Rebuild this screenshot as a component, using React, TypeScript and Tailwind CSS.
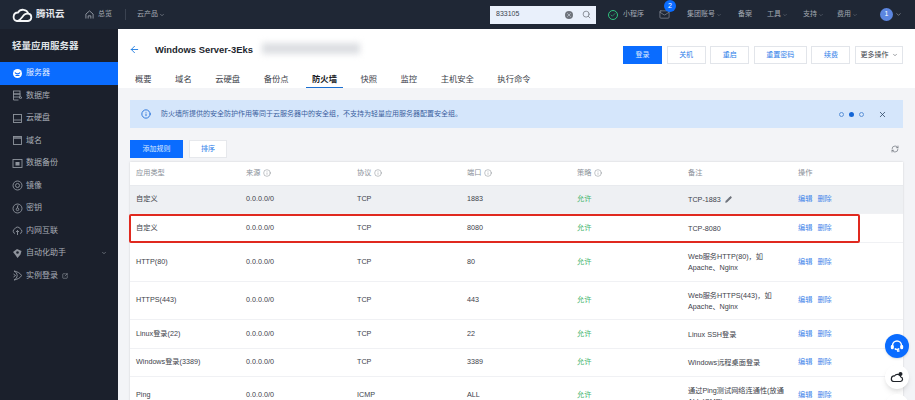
import { ArrowLeft, ChevronDown, Info, Pencil, Search, Mail, X, Check, SquareArrowOutUpRight, RefreshCw } from "lucide-react";
import type { ReactNode } from "react";

const font = "font-['Liberation_Sans','Noto_Sans_CJK_SC',sans-serif]";

const sideIcons: Record<string, ReactNode> = {
  服务器: (
    <>
      <circle cx="5.500" cy="5.500" r="4.500" fill="currentColor" stroke="none" />
      <path d="M3 4.500c1 1.800 4 1.800 5 0M3.500 7.500h4" stroke="#0a6cff" strokeWidth="1.100" />
    </>
  ),
  数据库: (
    <>
      <rect x="1.500" y="1" width="6.500" height="3" />
      <rect x="1.500" y="4" width="6.500" height="3" />
      <path d="M1.500 7v3h5M8.500 8.500a1 1 0 1 1 .01 0" />
    </>
  ),
  云硬盘: (
    <>
      <rect x="1.500" y="1.500" width="8" height="8" />
      <path d="M1.500 7h8" />
    </>
  ),
  域名: (
    <>
      <rect x="1.500" y="1.500" width="8" height="8" />
      <path d="M1.500 3h8" strokeWidth="1.400" />
    </>
  ),
  数据备份: (
    <>
      <rect x="1" y="1.500" width="9" height="8" />
      <rect x="3.500" y="4" width="4" height="3.500" fill="currentColor" stroke="none" />
    </>
  ),
  镜像: (
    <>
      <circle cx="5.500" cy="5.500" r="4.500" />
      <circle cx="5.500" cy="5.500" r="2" />
    </>
  ),
  密钥: (
    <>
      <circle cx="5.500" cy="5.500" r="4.500" />
      <circle cx="5.500" cy="6.300" r="1.300" />
      <path d="M5.500 5V2.800h1" />
    </>
  ),
  内网互联: (
    <>
      <path d="M3 8.500a2.400 2.400 0 0 1-.2-4.600 3 3 0 0 1 5.600.2 2.300 2.300 0 0 1-.4 4.400" />
      <path d="M5.500 10V5.500M4 7l1.500-1.500L7 7" />
    </>
  ),
  自动化助手: (
    <>
      <path d="M5 1 9.500 3 8.500 6.500 5.500 10 3 6.500 1 4Z" fill="currentColor" stroke="none" />
      <circle cx="5.500" cy="4.500" r="1.300" fill="#1b202c" stroke="none" />
    </>
  ),
  实例登录: (
    <path d="M2 1c3 .5 6.500 2.200 7.500 4.500C8.500 8 5 9.500 2 10c2-1 3-2.500 3.200-4.500C5 3.500 4 2 2 1Z M1.500 4l2 1.500-2 1.500" />
  ),
};

const sideItems = [
  { label: "服务器", active: true },
  { label: "数据库" },
  { label: "云硬盘" },
  { label: "域名" },
  { label: "数据备份" },
  { label: "镜像" },
  { label: "密钥" },
  { label: "内网互联" },
  { label: "自动化助手", arrow: true },
  { label: "实例登录", ext: true },
];

const tabs = ["概要", "域名", "云硬盘", "备份点", "防火墙", "快照", "监控", "主机安全", "执行命令"];

const rows = [
  { type: "自定义", proto: "TCP", port: "1883", note: ["TCP-1883"], h: "h-[28px]", hover: true, edit: true },
  { type: "自定义", proto: "TCP", port: "8080", note: ["TCP-8080"], h: "h-[29px]" },
  { type: "HTTP(80)", proto: "TCP", port: "80", note: ["Web服务HTTP(80)，如", "Apache、Nginx"], h: "h-[39px]" },
  { type: "HTTPS(443)", proto: "TCP", port: "443", note: ["Web服务HTTPS(443)，如", "Apache、Nginx"], h: "h-[38px]" },
  { type: "Linux登录(22)", proto: "TCP", port: "22", note: ["Linux SSH登录"], h: "h-[29px]" },
  { type: "Windows登录(3389)", proto: "TCP", port: "3389", note: ["Windows远程桌面登录"], h: "h-[28px]" },
  { type: "Ping", proto: "ICMP", port: "ALL", note: ["通过Ping测试网络连通性(放通", "ALL ICMP)"], h: "h-[38px]" },
];

const cols = "grid grid-cols-[110px_111px_110px_110px_111px_110px_1fr] pl-[6px] items-center";

function TopBar() {
  return (
    <header className="h-[29px] shrink-0 bg-[#1f2735] flex items-center text-[#a3a9b3] text-[7px]">
      <svg width="21" height="14" viewBox="0 0 21 14" fill="none" stroke="#f4f6f8" strokeWidth="1.800" className="ml-[12px]">
        <path d="M5 13h11a3.700 3.700 0 0 0 .4-7.300A5.800 5.800 0 0 0 6 4.500 4.300 4.300 0 0 0 5 13Z" />
        <path d="M6 12.800c3-1 4.500-4.800 6.500-6.300 1.200-.9 2.600-1.100 4-.8" />
      </svg>
      <span className="ml-[3px] text-[9.500px] font-bold text-[#e6e8ec] w-[30px] whitespace-nowrap">腾讯云</span>
      <svg width="9" height="9" viewBox="0 0 10 10" fill="none" stroke="#a3a9b3" strokeWidth="0.900" className="ml-[19px]">
        <path d="M1 4.500 5 1l4 3.500V9.500M1 4.500V9.500M3.500 9.500V6.500h3v3" />
      </svg>
      <span className="ml-[4px] w-[16px]">总览</span>
      <div className="ml-[11px] h-[11px] w-px bg-[#3a4250]" />
      <span className="ml-[11px]">云产品</span>
      <ChevronDown size={6} className="ml-[1px]" />
      <div className="ml-[325px] h-[18px] w-[106px] bg-[#e9f0fb] flex items-center pl-[6px] pr-[5px] text-[#3b4250]">
        <span>833105</span>
        <span className="ml-auto w-[8px] h-[8px] rounded-full bg-[#6f747c] flex items-center justify-center">
          <X size={6} strokeWidth={2} className="text-[#e9f0fb]" />
        </span>
        <Search size={9} className="ml-[9px] text-[#6f747c]" />
      </div>
      <span className="ml-[12px] w-[10px] h-[10px] rounded-full border border-[#2fc37e] flex items-center justify-center">
        <Check size={6} strokeWidth={2.500} className="text-[#2fc37e]" />
      </span>
      <span className="ml-[5px]">小程序</span>
      <div className="relative ml-[15px]">
        <Mail size={11} strokeWidth={1.200} />
        <span className="absolute -top-[9px] left-[5px] w-[12px] h-[12px] rounded-full bg-[#0a6cff] text-white text-[7px] flex items-center justify-center">2</span>
      </div>
      <span className="ml-[17px]">集团账号</span>
      <ChevronDown size={6} className="ml-[1px] opacity-60" />
      <span className="ml-[16px]">备案</span>
      <span className="ml-[15px]">工具</span>
      <ChevronDown size={6} className="ml-[1px] opacity-60" />
      <span className="ml-[15px]">支持</span>
      <ChevronDown size={6} className="ml-[1px] opacity-60" />
      <span className="ml-[13px]">费用</span>
      <ChevronDown size={6} className="ml-[1px] opacity-60" />
      <span className="ml-[22px] w-[13px] h-[13px] rounded-full bg-[#5c86e0] text-white flex items-center justify-center">1</span>
      <ChevronDown size={7} className="ml-[2px]" />
    </header>
  );
}

function Sidebar() {
  return (
    <aside className="w-[118px] shrink-0 bg-[#1b202c] text-[#a9aeb7]">
      <div className="h-[33px] pl-[12px] pt-[1px] flex items-center text-[9.500px] font-bold text-[#dfe2e6]">轻量应用服务器</div>
      {sideItems.map((it) => (
        <div key={it.label} className={`h-[22.500px] pl-[12px] pr-[11px] flex items-center text-[8px] ${it.active ? "bg-[#0a6cff] text-[#e8f1ff]" : ""}`}>
          <svg width="11" height="11" viewBox="0 0 11 11" fill="none" stroke="currentColor" strokeWidth="0.900" className={it.active ? "text-white" : "text-[#8f949d]"}>
            {sideIcons[it.label]}
          </svg>
          <span className="ml-[3px]">{it.label}</span>
          {it.arrow && <ChevronDown size={6} className="ml-auto" />}
          {it.ext && <SquareArrowOutUpRight size={6} className="ml-[4px]" />}
        </div>
      ))}
    </aside>
  );
}

function DetailHeader() {
  const actions = [
    { label: "关机", w: "w-[39px]" },
    { label: "重启", w: "w-[39px]" },
    { label: "重置密码", w: "w-[53px]" },
    { label: "续费", w: "w-[39px]" },
  ];
  return (
    <div className="h-[59px] shrink-0 bg-white pl-[11px] pr-[12px] pt-[17px]">
      <div className="flex items-start h-[18px]">
        <ArrowLeft size={11} className="text-[#1f7ce0] mt-[-2px]" />
        <span className="ml-[15px] mt-[-2px] text-[9.400px] leading-[11px] font-bold text-[#23272e] whitespace-nowrap">Windows Server-3Eks</span>
        <div className="ml-[9px] mt-[-3px] w-[98px] h-[11px] bg-[#dcdee2] blur-[3px]" />
        <div className="ml-auto flex gap-[4.600px] text-[7px]">
          <button className="w-[39px] h-[18px] bg-[#0a6cff] text-[#dbe9ff]">登录</button>
          {actions.map((a) => (
            <button key={a.label} className={`${a.w} h-[18px] bg-white border border-[#e2e5ea] text-[#2b7de9]`}>{a.label}</button>
          ))}
          <button className="w-[48px] h-[18px] bg-white border border-[#e2e5ea] text-[#3d424a] flex items-center justify-center gap-[3px]">
            更多操作 <ChevronDown size={6} />
          </button>
        </div>
      </div>
      <nav className="flex gap-[11.500px] mt-[3px] text-[8.300px] text-[#3d424a]">
        {tabs.map((t) => (
          <span key={t} className={`px-[6px] h-[21px] pt-[4px] flex items-center border-b-[1.500px] ${t === "防火墙" ? "border-[#1b6fd0] font-bold text-[#17191d]" : "border-transparent"}`}>{t}</span>
        ))}
      </nav>
    </div>
  );
}

function Head({ label, tip }: { label: string; tip?: boolean }) {
  return (
    <span className="flex items-center gap-[3px]">
      {label}
      {tip && <Info size={8} strokeWidth={1.200} className="text-[#666c75]" />}
    </span>
  );
}

function RuleTable() {
  return (
    <div className="relative mt-[4px] bg-white shadow-[0_0_2px_rgba(0,0,0,0.15)] text-[7.200px] text-[#3d424a]">
      <div className={`${cols} h-[24px] text-[#8a9099] border-b border-[#e8eaee]`}>
        <Head label="应用类型" />
        <Head label="来源" tip />
        <Head label="协议" tip />
        <Head label="端口" tip />
        <Head label="策略" tip />
        <Head label="备注" />
        <Head label="操作" />
      </div>
      {rows.map((r, i) => (
        <div key={i} className={`${cols} ${r.h} border-b border-[#f0f1f4] ${r.hover ? "bg-[#eef0f3]" : ""}`}>
          <span>{r.type}</span>
          <span>0.0.0.0/0</span>
          <span>{r.proto}</span>
          <span>{r.port}</span>
          <span className="text-[#47b56f]">允许</span>
          <div className="leading-[11px]">
            {r.note.map((n, j) => (
              <div key={j} className="flex items-center gap-[4px] whitespace-nowrap">
                {n}
                {r.edit && <Pencil size={7} className="text-[#6f747c]" fill="currentColor" />}
              </div>
            ))}
          </div>
          <span className="flex gap-[5px] text-[#3f86ea]"><span>编辑</span><span>删除</span></span>
        </div>
      ))}
      <div className="absolute left-[-1px] top-[52px] w-[731px] h-[29px] border-2 border-[#e0291f] rounded-[2px]" />
    </div>
  );
}

export default function App() {
  return (
    <div className={`relative w-[915px] h-[400px] overflow-hidden flex flex-col bg-[#f3f4f7] ${font}`}>
      <TopBar />
      <div className="flex flex-1 min-h-0">
        <Sidebar />
        <main className="flex-1 min-w-0 flex flex-col">
          <DetailHeader />
          <div className="pl-[12px] pr-[12px] pt-[12px]">
            <div className="h-[28px] bg-[#d5e6fb] flex items-center pl-[11px] pr-[16px] text-[7px] text-[#3a5f9e]">
              <Info size={10} className="text-[#1466d6]" />
              <span className="ml-[10px]">防火墙所提供的安全防护作用等同于云服务器中的安全组，不支持为轻量应用服务器配置安全组。</span>
              <span className="ml-auto w-[5px] h-[5px] rounded-full border border-[#5d93d8]" />
              <span className="ml-[5px] w-[5px] h-[5px] rounded-full bg-[#1466d6]" />
              <span className="ml-[5px] w-[5px] h-[5px] rounded-full border border-[#5d93d8]" />
              <X size={9} className="ml-[14px] text-[#27415f]" />
            </div>
            <div className="mt-[12px] flex items-center gap-[6px] text-[7px]">
              <button className="w-[53px] h-[18px] bg-[#0a6cff] text-[#dbe9ff]">添加规则</button>
              <button className="w-[38px] h-[18px] bg-white border border-[#e6e8ec] text-[#2b7de9]">排序</button>
              <RefreshCw size={8} className="ml-auto mr-[4px] text-[#666c75]" />
            </div>
            <RuleTable />
          </div>
        </main>
      </div>
      <button className="absolute left-[885px] top-[334px] w-[24px] h-[24px] rounded-full bg-[#0a6cff] flex items-center justify-center text-white shadow">
        <svg width="14" height="14" viewBox="0 0 14 14" fill="none" stroke="white" strokeWidth="1.400">
          <path d="M2.500 9V6.500a4.500 4.500 0 0 1 9 0V9" />
          <rect x="1.500" y="6.500" width="1.600" height="3" rx="0.800" fill="white" />
          <rect x="10.900" y="6.500" width="1.600" height="3" rx="0.800" fill="white" />
          <path d="M4.800 9.500c1 1.400 3.400 1.400 4.400 0M7 12h2.500" />
        </svg>
      </button>
      <button className="absolute left-[885px] top-[365px] w-[24px] h-[24px] rounded-full bg-white flex items-center justify-center shadow-md">
        <svg width="14" height="12" viewBox="0 0 14 12" fill="none" stroke="#1f2329" strokeWidth="1.200">
          <path d="M3.500 10.500h7a2.300 2.300 0 0 0 .4-4.500A3.500 3.500 0 0 0 4.500 5 2.800 2.800 0 0 0 3.500 10.500Z" />
          <circle cx="10.500" cy="3" r="2" fill="#1f2329" stroke="none" />
        </svg>
      </button>
      <span className="absolute left-[885px] top-[394px] w-[24px] h-[24px] rounded-full bg-white shadow-md" />
    </div>
  );
}
